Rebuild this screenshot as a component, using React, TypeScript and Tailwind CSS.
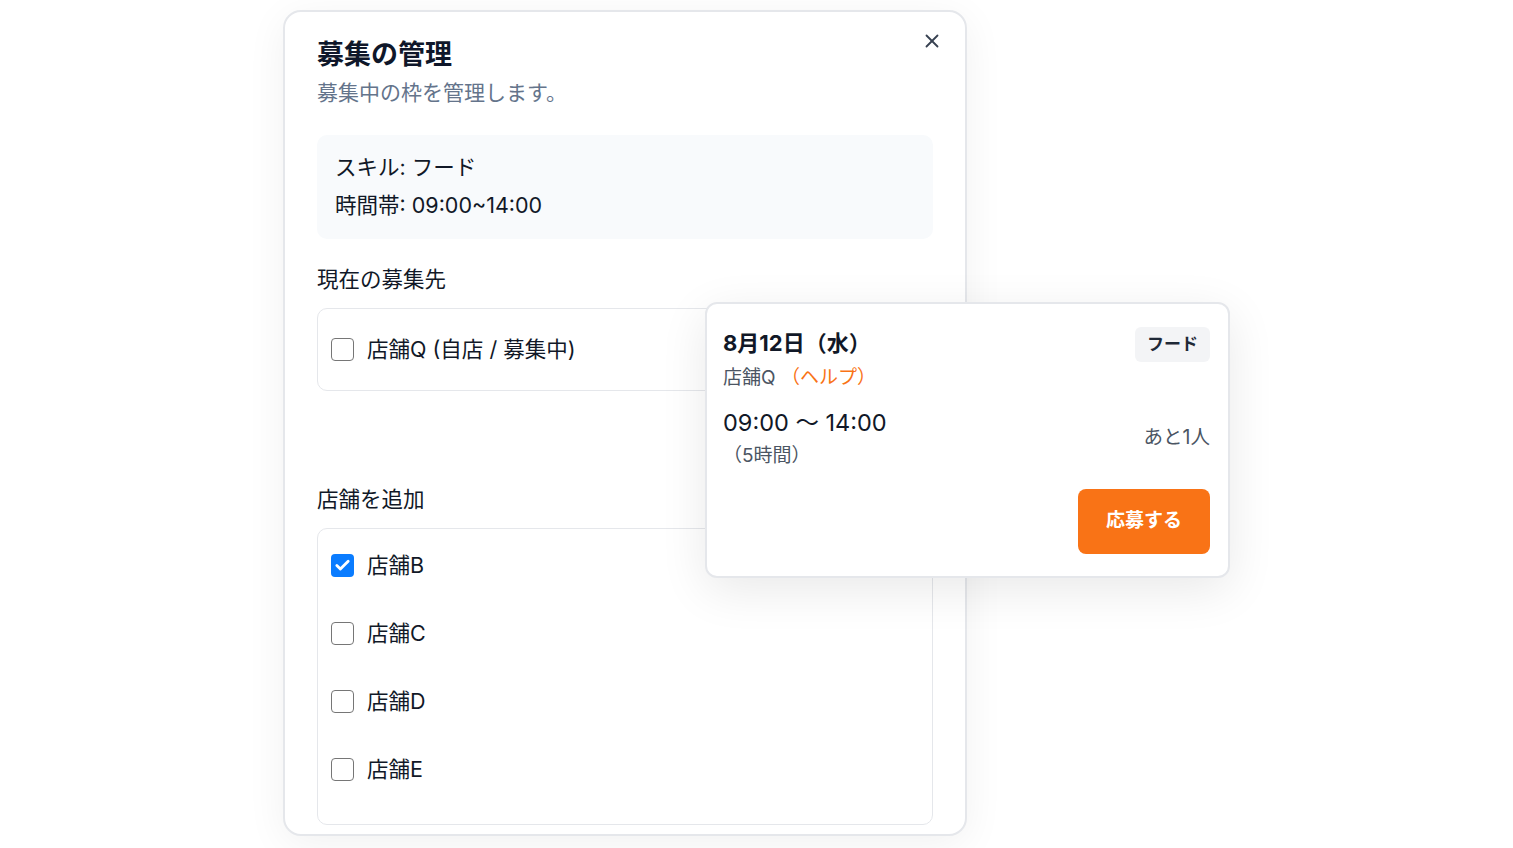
import { X, Check } from "lucide-react"

const stores = [
  { name: "店舗B", checked: true },
  { name: "店舗C", checked: false },
  { name: "店舗D", checked: false },
  { name: "店舗E", checked: false },
]

function Box({ checked }: { checked: boolean }) {
  if (checked) {
    return (
      <span className="flex h-[23px] w-[23px] shrink-0 items-center justify-center rounded-[4px] bg-[#0a7cff]">
        <Check className="h-[17px] w-[17px] text-white" strokeWidth={4} />
      </span>
    )
  }
  return <span className="h-[23px] w-[23px] shrink-0 rounded-[4px] border-[1.5px] border-[#767676] bg-white" />
}

export default function App() {
  return (
    <div
      className="relative h-[848px] w-full overflow-hidden bg-white pl-[283px] pt-[10px] text-[#111827]"
      style={{ fontFamily: 'Inter, "Noto Sans CJK JP", sans-serif' }}
    >
      {/* Dialog */}
      <div className="relative h-[826px] w-[684px] overflow-hidden rounded-[18px] border-2 border-[#e5e7eb] bg-white px-8 pt-[26px] shadow-[0_8px_40px_rgba(0,0,0,0.06)]">
        <button className="absolute right-[22px] top-[18px] text-[#374151]">
          <X className="h-[22px] w-[22px]" strokeWidth={2} />
        </button>

        <h2 className="text-[27px] font-bold leading-[34px] text-[#0f172a]">募集の管理</h2>
        <p className="mt-[7px] text-[21px] leading-[28px] text-[#64748b]">募集中の枠を管理します。</p>

        <div className="mt-[28px] flex flex-col gap-[8px] rounded-[10px] bg-[#f8fafc] px-[18px] pb-[19px] pt-[17px] text-[21.5px] leading-[30px]">
          <div>スキル: フード</div>
          <div>時間帯: 09:00~14:00</div>
        </div>

        <div className="mt-[26px] text-[21.5px] leading-[28px]">現在の募集先</div>
        <div className="mt-[15px] flex h-[83px] items-center gap-[13px] rounded-[10px] border border-[#e5e7eb] pl-[13px] text-[21.5px]">
          <Box checked={false} />
          <span>店舗Q (自店 / 募集中)</span>
        </div>

        <div className="mt-[94px] text-[21.5px] leading-[28px]">店舗を追加</div>
        <div className="mt-[15px] flex flex-col rounded-[10px] border border-[#e5e7eb] pb-[21px] pl-[13px] pt-[2px]">
          {stores.map((s) => (
            <label key={s.name} className="flex h-[68px] items-center gap-[13px] text-[21.5px]">
              <Box checked={s.checked} />
              <span>{s.name}</span>
            </label>
          ))}
        </div>
      </div>

      {/* Shift popover */}
      <div className="absolute left-[705px] top-[302px] flex w-[525px] flex-col rounded-[12px] border-2 border-[#e5e7eb] bg-white pb-[22px] pl-[16px] pr-[18px] pt-[23px] shadow-[0_12px_48px_rgba(0,0,0,0.09)]">
        <div className="flex items-start justify-between">
          <div>
            <div className="text-[22px] font-bold leading-[32px] text-[#111827]">8月12日（水）</div>
            <div className="mt-[6px] text-[19px] leading-[26px] text-[#4b5563]">
              店舗Q <span className="text-[#f97316]">（ヘルプ）</span>
            </div>
          </div>
          <span className="rounded-[6px] bg-[#f3f4f6] px-[12px] py-[5px] text-[17px] font-bold leading-[25px] text-[#1f2937]">
            フード
          </span>
        </div>

        <div className="mt-[16px] flex items-center justify-between">
          <div>
            <div className="text-[23.5px] leading-[32px] text-[#111827]">09:00 〜 14:00</div>
            <div className="mt-[4px] text-[19px] leading-[26px] text-[#4b5563]">（5時間）</div>
          </div>
          <div className="text-[19.5px] text-[#4b5563]">あと1人</div>
        </div>

        <div className="mt-[20px] flex justify-end">
          <button className="flex h-[65px] w-[132px] items-center justify-center rounded-[8px] bg-[#f97316] text-[19px] font-bold text-white">
            応募する
          </button>
        </div>
      </div>
    </div>
  )
}
